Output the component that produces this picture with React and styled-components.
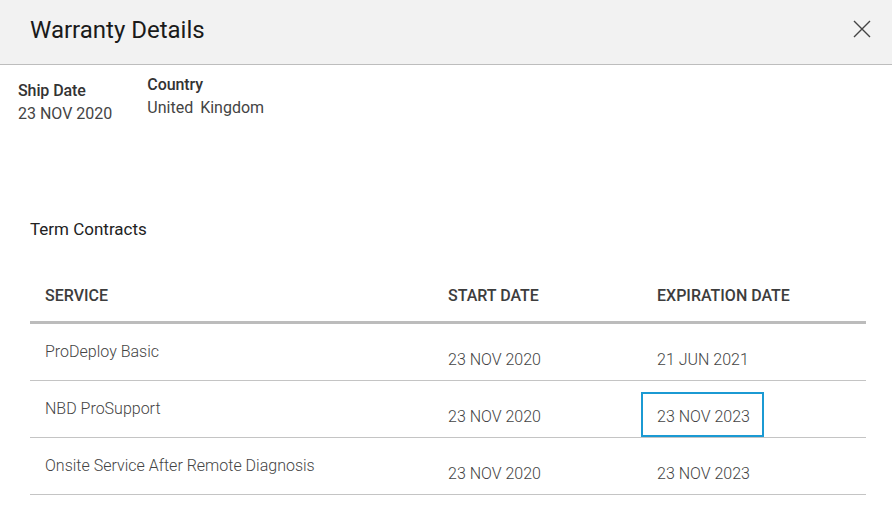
import React from 'react';
import styled, { createGlobalStyle } from 'styled-components';

const GlobalStyle = createGlobalStyle`
	body {
		margin: 0;
		background: #ffffff;
		font-family: Roboto, "Noto Sans", Arial, sans-serif;
	}
`;

const Modal = styled.div`
	width: 892px;
	height: 505px;
	background: #fff;
	overflow: hidden;
`;

const Header = styled.div`
	height: 65px;
	box-sizing: border-box;
	background: #f2f2f2;
	border-bottom: 1px solid #bdbdbd;
	display: flex;
	align-items: center;
	justify-content: space-between;
	padding: 0 18px 0 30px;
`;

const Title = styled.h2`
	margin: 0 0 4px;
	font-size: 24px;
	font-weight: 400;
	color: #1a1a1a;
`;

const CloseButton = styled.button`
	border: none;
	background: none;
	padding: 0;
	width: 24px;
	height: 24px;
	margin-bottom: 6px;
	cursor: pointer;
	display: flex;
	align-items: center;
	justify-content: center;
`;

const InfoRow = styled.div`
	display: flex;
	gap: 35px;
	padding: 12px 0 0 18px;
	height: 137px;
	box-sizing: border-box;
`;

const InfoBlock = styled.div`
	display: flex;
	flex-direction: column;
	margin-top: ${p => p.$offset || 0}px;
`;

const InfoLabel = styled.div`
	font-size: 16px;
	font-weight: 500;
	color: #333;
	line-height: 22px;
	letter-spacing: -0.1px;
`;

const InfoValue = styled.div`
	font-size: 16px;
	font-weight: 400;
	color: #444;
	line-height: 24px;
	word-spacing: ${p => p.$wide ? '3px' : '0'};
`;

const Section = styled.div`
	padding: 0 26px 0 30px;
`;

const SectionTitle = styled.h3`
	margin: 0;
	font-size: 17px;
	font-weight: 400;
	color: #222;
	line-height: 24px;
	padding-top: 15px;
`;

const Table = styled.div`
	margin-top: 38px;
`;

const HeadRow = styled.div`
	display: grid;
	grid-template-columns: 403px 209px 1fr;
	height: 45px;
	box-sizing: border-box;
	align-items: start;
	border-bottom: 3px solid #bcbcbc;
	padding-left: 15px;
`;

const HeadCell = styled.div`
	font-size: 16px;
	font-weight: 500;
	color: #3d3d3d;
	line-height: 20px;
	padding-top: 7px;
`;

const Row = styled.div`
	display: grid;
	grid-template-columns: 403px 209px 1fr;
	height: 57px;
	box-sizing: border-box;
	border-bottom: 1px solid #c4c4c4;
	padding-left: 15px;
`;

const NameCell = styled.div`
	font-size: 16px;
	font-weight: 300;
	color: #444;
	padding-top: 18px;
	line-height: 20px;
`;

const DateCell = styled.div`
	font-size: 16px;
	font-weight: 300;
	color: #444;
	padding-top: 26px;
	line-height: 20px;
`;

const Highlight = styled.span`
	display: inline-block;
	margin: -16px 0 0 -16px;
	padding: 13px 12px 8px 14px;
	border: 2px solid #1b9ad3;
	line-height: 20px;
`;

const rows = [
	{ name: 'ProDeploy Basic', start: '23 NOV 2020', end: '21 JUN 2021' },
	{ name: 'NBD ProSupport', start: '23 NOV 2020', end: '23 NOV 2023', focused: true },
	{ name: 'Onsite Service After Remote Diagnosis', start: '23 NOV 2020', end: '23 NOV 2023' },
];

function App() {
	return (
		<Modal>
			<GlobalStyle />
			<Header>
				<Title>Warranty Details</Title>
				<CloseButton aria-label="Close">
					<svg width="18" height="18" viewBox="0 0 18 18">
						<path d="M1 1L17 17M17 1L1 17" stroke="#444" strokeWidth="1.4" fill="none" />
					</svg>
				</CloseButton>
			</Header>

			<InfoRow>
				<InfoBlock $offset={3}>
					<InfoLabel>Ship Date</InfoLabel>
					<InfoValue>23 NOV 2020</InfoValue>
				</InfoBlock>
				<InfoBlock $offset={-3}>
					<InfoLabel>Country</InfoLabel>
					<InfoValue $wide>United Kingdom</InfoValue>
				</InfoBlock>
			</InfoRow>

			<Section>
				<SectionTitle>Term Contracts</SectionTitle>
				<Table>
					<HeadRow>
						<HeadCell>SERVICE</HeadCell>
						<HeadCell>START DATE</HeadCell>
						<HeadCell>EXPIRATION DATE</HeadCell>
					</HeadRow>
					{rows.map(r => (
						<Row key={r.name}>
							<NameCell>{r.name}</NameCell>
							<DateCell>{r.start}</DateCell>
							<DateCell>
								{r.focused ? <Highlight>{r.end}</Highlight> : r.end}
							</DateCell>
						</Row>
					))}
				</Table>
			</Section>
		</Modal>
	);
}

export default App;
